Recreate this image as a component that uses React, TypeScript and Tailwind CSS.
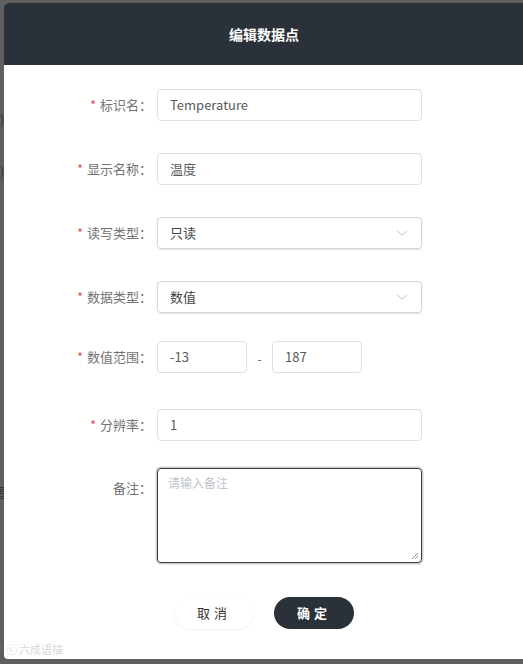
import React from "react";

const font = { fontFamily: '"Noto Sans CJK SC", "Open Sans", sans-serif' };

function Label({ text, required = true }: { text: string; required?: boolean }) {
  return (
    <div className="w-[153px] shrink-0 flex items-center justify-end pr-[5px] text-[13px] text-[#737373]">
      {required && <span className="text-[#e0474c] mr-[4px] text-[12px]">*</span>}
      <span>{text}：</span>
    </div>
  );
}

function Input({ value, w = "w-[265px]" }: { value: string; w?: string }) {
  return (
    <div className={`${w} h-[32px] border border-[#dcdfe6] rounded-[4px] flex items-center px-[12px] text-[13px] text-[#5a5a5a]`}>
      {value}
    </div>
  );
}

function Select({ value }: { value: string }) {
  return (
    <div className="w-[265px] h-[32px] border border-[#d4d6db] rounded-[4px] shadow-[0_1px_2px_rgba(0,0,0,0.12)] flex items-center justify-between px-[12px] text-[13px] text-[#444]">
      <span>{value}</span>
      <svg width="12" height="8" viewBox="0 0 12 8" className="mr-[1px]">
        <path d="M1 1.5 L6 6.5 L11 1.5" fill="none" stroke="#b8bcc4" strokeWidth="1" />
      </svg>
    </div>
  );
}

export default function App() {
  return (
    <div className="w-[523px] h-[664px] bg-[#5f5f5f] relative overflow-hidden" style={font}>
      <div className="absolute left-0 top-[110px] text-[#333] text-[13px]">)</div>
      <div className="absolute left-0 top-[162px] text-[#333] text-[13px]">)</div>
      <div className="absolute left-[-6px] top-[482px] text-[#333] text-[13px]">匿</div>
      <div className="absolute left-[4px] top-[3px] w-[530px] h-[656px] bg-white rounded-[4px] overflow-hidden flex flex-col">
        <div className="h-[62px] bg-[#2b3138] flex items-center justify-center text-white text-[14px] font-bold pr-[10px]">
          编辑数据点
        </div>
        <div className="flex flex-col pt-[24px]">
          <div className="flex h-[32px]">
            <Label text="标识名" />
            <Input value="Temperature" />
          </div>
          <div className="flex h-[32px] mt-[32px]">
            <Label text="显示名称" />
            <Input value="温度" />
          </div>
          <div className="flex h-[32px] mt-[32px]">
            <Label text="读写类型" />
            <Select value="只读" />
          </div>
          <div className="flex h-[32px] mt-[32px]">
            <Label text="数据类型" />
            <Select value="数值" />
          </div>
          <div className="flex h-[32px] mt-[28px]">
            <Label text="数值范围" />
            <div className="flex items-start">
              <Input value="-13" w="w-[90px]" />
              <span className="w-[25px] text-center text-[12px] text-[#606266] mt-[9px]">-</span>
              <Input value="187" w="w-[90px]" />
            </div>
          </div>
          <div className="flex h-[32px] mt-[36px]">
            <Label text="分辨率" />
            <Input value="1" />
          </div>
          <div className="flex mt-[27px]">
            <div className="w-[153px] shrink-0 flex justify-end pr-[5px] pt-[10px] text-[13px] text-[#737373]">
              <span>备注：</span>
            </div>
            <div className="relative w-[265px] h-[95px] rounded-[4px] border border-[#3a3a3a] shadow-[0_0_0_1.5px_#cfcfcf] px-[10px] pt-[5px] text-[12px] text-[#c0c4cc]">
              请输入备注
              <svg width="8" height="8" viewBox="0 0 8 8" className="absolute right-[2px] bottom-[2px]">
                <path d="M7 1 L1 7 M7 4 L4 7" stroke="#777" strokeWidth="0.8" />
              </svg>
            </div>
          </div>
          <div className="flex mt-[34px] pl-[171px] gap-[21px]">
            <div className="w-[78px] h-[32px] rounded-full bg-white shadow-[0_1px_3px_rgba(0,0,0,0.06)] flex items-center justify-center text-[13px] text-[#333] tracking-[4px]">
              取消
            </div>
            <div className="w-[80px] h-[32px] rounded-full bg-[#2b3138] flex items-center justify-center text-[13px] font-bold text-white tracking-[4px]">
              确定
            </div>
          </div>
        </div>
        <div className="absolute left-[2px] bottom-[2px] flex items-center gap-[2px] text-[11px] text-[#d8d8d8]">
          <span>ⓒ</span>
          <span>六成语描</span>
        </div>
      </div>
    </div>
  );
}
